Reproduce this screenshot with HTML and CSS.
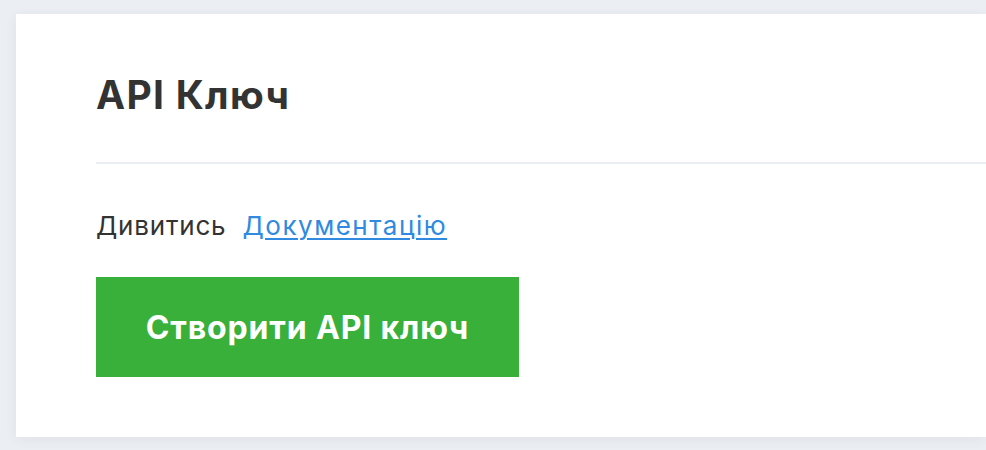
FILE: index.html
```html
<!DOCTYPE html>
<html lang="uk">
<head>
<meta charset="utf-8">
<link rel="stylesheet" href="styles.css">
</head>
<body>
<div class="page">
  <section class="card">
    <h1 class="title">API Ключ</h1>
    <hr class="divider">
    <p class="docs">Дивитись <a class="docs-link" href="#">Документацію</a></p>
    <button class="create-btn" type="button">Створити API ключ</button>
  </section>
</div>
</body>
</html>
```
FILE: styles.css
```css
html, body {
  margin: 0;
  padding: 0;
  background: #ebeef2;
  font-family: Inter, "Noto Sans", sans-serif;
  overflow: hidden;
}
.page {
  padding: 14px 0 0 16px;
  height: 450px;
  box-sizing: border-box;
}
.card {
  background: #fff;
  height: 423px;
  box-sizing: border-box;
  padding: 0 0 0 80px;
  box-shadow: 0 2px 12px rgba(0, 0, 0, 0.06);
  display: flex;
  flex-direction: column;
  align-items: flex-start;
}
.title {
  margin: 58px 0 0;
  font-size: 39px;
  line-height: 46px;
  font-weight: 700;
  color: #333;
  letter-spacing: 1.3px;
}
.divider {
  align-self: stretch;
  margin: 44px 0 0;
  border: 0;
  height: 2px;
  background: #eaedf1;
}
.docs {
  margin: 46px 0 0;
  font-size: 26px;
  line-height: 32px;
  color: #333;
  letter-spacing: 0.8px;
}
.docs-link {
  margin-left: 8px;
  color: #2f8ae0;
  letter-spacing: 1.5px;
  text-decoration: underline;
  text-underline-offset: 3px;
  text-decoration-thickness: 2px;
}
.create-btn {
  margin-top: 35px;
  width: 423px;
  height: 100px;
  border: 0;
  background: #38b03a;
  color: #fff;
  font-family: inherit;
  font-size: 32px;
  font-weight: 700;
  letter-spacing: 0.85px;
  cursor: pointer;
}
```
